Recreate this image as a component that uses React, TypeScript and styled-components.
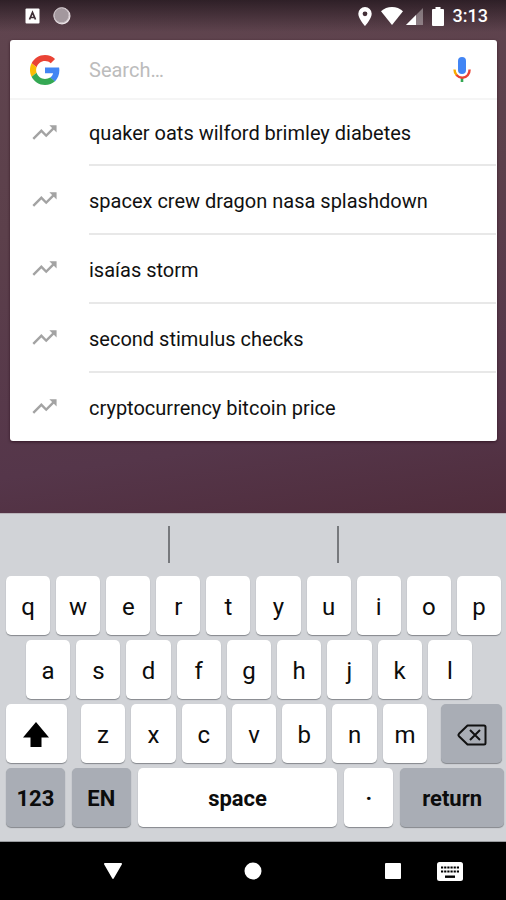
import React from "react";
import styled, { createGlobalStyle } from "styled-components";

const GlobalStyle = createGlobalStyle`
  *, *::before, *::after { box-sizing: border-box; }
  body { margin: 0; background: #000; font-family: Roboto, "Noto Sans", sans-serif; }
  button, input { font: inherit; color: inherit; }
  ul { list-style: none; margin: 0; padding: 0; }
  svg { display: block; flex: none; }
`;

const Screen = styled.div`
  display: flex;
  flex-direction: column;
  min-height: 100vh;
`;

const Wallpaper = styled.main`
  flex: 1;
  background:
    linear-gradient(180deg, rgba(20, 12, 18, 0.65) 0, rgba(20, 12, 18, 0) 32px),
    linear-gradient(172deg, #60454f 0%, #5c404b 40%, #55364a 82%, #4f2c3b 100%);
`;

const StatusBar = styled.header`
  display: flex;
  align-items: center;
  justify-content: space-between;
  height: 32px;
  margin-bottom: 8px;
  padding: 0 18px 0 25px;
  color: #fff;
`;

const StatusGroup = styled.div<{ $gap: number }>`
  display: flex;
  align-items: center;
  gap: ${(p) => p.$gap}px;
`;

const Clock = styled.time`
  margin-left: 4px;
  font-size: 18px;
  font-weight: 500;
  line-height: 24px;
`;

const SearchCard = styled.section`
  margin: 0 9px 0 10px;
  border-radius: 3px;
  background: #fff;
  box-shadow: 0 1px 3px rgba(30, 0, 15, 0.6);
`;

const SearchForm = styled.form`
  display: flex;
  align-items: center;
  height: 60px;
  padding: 1px 26px 0 20px;
  border-bottom: 2px solid #f5f5f5;
`;

const SearchInput = styled.input`
  flex: 1;
  min-width: 0;
  margin-left: 29px;
  padding: 0;
  border: 0;
  outline: 0;
  background: none;
  font-size: 20px;
  line-height: 28px;
  color: #111;
  &::placeholder { color: #bcbcbc; opacity: 1; }
`;

const IconButton = styled.button`
  display: flex;
  padding: 0;
  border: 0;
  background: none;
  color: #fff;
`;

const Suggestion = styled.button`
  display: flex;
  align-items: stretch;
  width: 100%;
  height: 100%;
  padding: 0 1px 0 20px;
  border: 0;
  background: none;
  text-align: left;
  color: #111;
`;

const SuggestionIcon = styled.span`
  display: flex;
  align-items: center;
  width: 59px;
  padding-bottom: 2px;
  color: #a3a3a3;
`;

const SuggestionText = styled.span`
  flex: 1;
  display: flex;
  align-items: center;
  padding-top: 2px;
  font-size: 20px;
  line-height: 28px;
`;

const SuggestionItem = styled.li`
  height: 69px;
  &:first-child { height: 66px; }
  &:last-child { height: 68px; }
  &:not(:last-child) ${SuggestionText} { border-bottom: 2px solid #e8e8e8; }
`;

const Keyboard = styled.section`
  padding-bottom: 14px;
  border-top: 1px solid #b9b3b9;
  border-bottom: 1px solid #999b9f;
  background: #d1d3d7;
`;

const Predictions = styled.div`
  display: grid;
  grid-template-columns: 168fr 169fr 169fr;
  height: 37px;
  margin: 12px 0 13px;
`;

const Prediction = styled.span`
  & + & { border-left: 2px solid #77797d; }
`;

const KeyRows = styled.div`
  display: grid;
  gap: 5px;
`;

const KeyRow = styled.div<{ $columns: string; $gap: number; $pad: string }>`
  display: grid;
  grid-template-columns: ${(p) => p.$columns};
  gap: ${(p) => p.$gap}px;
  padding: ${(p) => p.$pad};
`;

const LetterGroup = styled.div`
  display: grid;
  grid-template-columns: repeat(7, 1fr);
  gap: 6px;
`;

const Key = styled.button<{ $dark?: boolean; $bold?: boolean }>`
  display: flex;
  align-items: center;
  justify-content: center;
  min-width: 0;
  height: 59px;
  padding: 2px 0 0;
  border: 0;
  border-radius: 5px;
  background: ${(p) => (p.$dark ? "#a9adb5" : "#fff")};
  box-shadow: 0 1px 1px #84878c;
  color: #0c0c0c;
  font-size: ${(p) => (p.$bold ? 22 : 24)}px;
  font-weight: ${(p) => (p.$bold ? 700 : 400)};
  line-height: 28px;
`;

const NavBar = styled.nav`
  display: grid;
  grid-template-columns: 43fr 140fr 140fr 140fr 43fr;
  align-items: center;
  height: 58px;
  background: #000;
`;

const NavSlot = styled.div<{ $column: number }>`
  grid-column: ${(p) => p.$column};
  grid-row: 1;
  display: flex;
  justify-content: center;
`;

const KeyboardSlot = styled.div`
  grid-column: 4 / 6;
  grid-row: 1;
  display: flex;
  justify-content: flex-end;
  padding-right: 43px;
`;

const GoogleLogo = () => (
  <svg width="30" height="30" viewBox="0 0 48 48" aria-hidden="true">
    <path fill="#EA4335" d="M24 9.5c3.54 0 6.71 1.22 9.21 3.6l6.85-6.85C35.9 2.38 30.47 0 24 0 14.62 0 6.51 5.38 2.56 13.22l7.98 6.19C12.43 13.72 17.74 9.5 24 9.5z" />
    <path fill="#4285F4" d="M46.98 24.55c0-1.57-.15-3.09-.38-4.55H24v9.02h12.94c-.58 2.96-2.26 5.48-4.78 7.18l7.73 6c4.51-4.18 7.09-10.36 7.09-17.65z" />
    <path fill="#FBBC05" d="M10.53 28.59c-.48-1.45-.76-2.99-.76-4.59s.27-3.14.76-4.59l-7.98-6.19C.92 16.46 0 20.12 0 24c0 3.88.92 7.54 2.56 10.78l7.97-6.19z" />
    <path fill="#34A853" d="M24 48c6.48 0 11.93-2.13 15.89-5.81l-7.73-6c-2.15 1.45-4.92 2.3-8.16 2.3-6.26 0-11.57-4.22-13.47-9.91l-7.98 6.19C6.51 42.62 14.62 48 24 48z" />
  </svg>
);

const MicIcon = () => (
  <svg width="18" height="25" viewBox="0 0 18 25" fill="none" aria-hidden="true">
    <rect x="5" y="0" width="8" height="17" rx="4" fill="#4285F4" />
    <path d="M9 20v5" stroke="#34A853" strokeWidth="2.6" />
    <path d="M1.5 12.5c0 2.6 1 4.6 2.4 6" stroke="#F9AB00" strokeWidth="2.4" />
    <path d="M3.4 18c3.4 3.7 8.6 3.4 11.3.2 1.2-1.4 1.9-3.3 1.9-5.7" stroke="#EA4335" strokeWidth="2.4" />
  </svg>
);

const TrendIcon = () => (
  <svg width="29" height="29" viewBox="0 0 24 24" fill="currentColor" aria-hidden="true">
    <path d="M16 6l2.29 2.29-4.88 4.88-4-4L2 16.59 3.41 18l6-6 4 4 6.3-6.29L22 12V6z" />
  </svg>
);

const AppBadgeIcon = () => (
  <svg width="15" height="16" viewBox="0 0 15 16" aria-hidden="true">
    <rect x="0.5" y="0.5" width="14" height="15" rx="1" fill="#fff" />
    <path d="M4.5 11.5 7.5 4.5l3 7M5.5 9.5h4" fill="none" stroke="#3e2e36" strokeWidth="1.7" />
  </svg>
);

const SyncIcon = () => (
  <svg width="18" height="18" viewBox="0 0 18 18" aria-hidden="true">
    <circle cx="9" cy="9" r="8.5" fill="#eee6ea" />
    <circle cx="8.5" cy="8.3" r="7.2" fill="#a3989e" />
    <circle cx="8.5" cy="8.3" r="7.6" fill="none" stroke="#c4babf" strokeWidth="1" />
  </svg>
);

const PinIcon = () => (
  <svg width="14" height="19" viewBox="0 0 14 19" aria-hidden="true">
    <path fillRule="evenodd" fill="#fff" d="M7 0a6.7 6.7 0 0 0-6.7 6.7C.3 11.5 7 19 7 19s6.7-7.5 6.7-12.3A6.7 6.7 0 0 0 7 0zm0 4.4a2.4 2.4 0 1 1 0 4.8 2.4 2.4 0 0 1 0-4.8z" />
  </svg>
);

const WifiIcon = () => (
  <svg width="22" height="18" viewBox="0 0 22 18" aria-hidden="true">
    <path fill="#fff" d="M11 18 0 4.2C3 1.6 6.8 0 11 0s8 1.6 11 4.2z" />
  </svg>
);

const SignalIcon = () => (
  <svg width="17" height="17" viewBox="0 0 17 17" aria-hidden="true">
    <path fill="#fff" fillOpacity="0.35" d="M0 17 17 0v17z" />
    <path fill="#fff" d="M0 17 10 7v10z" />
  </svg>
);

const BatteryIcon = () => (
  <svg width="12" height="19" viewBox="0 0 12 19" aria-hidden="true">
    <path fill="#fff" d="M3.5 0h5v2H11a1 1 0 0 1 1 1v15a1 1 0 0 1-1 1H1a1 1 0 0 1-1-1V3a1 1 0 0 1 1-1h2.5z" />
  </svg>
);

const ShiftIcon = () => (
  <svg width="26" height="25" viewBox="0 0 26 25" aria-hidden="true">
    <path d="M13 0 26 15.5h-7.5V25h-11v-9.5H0z" />
  </svg>
);

const BackspaceIcon = () => (
  <svg width="30" height="22" viewBox="0 0 30 22" fill="none" stroke="#111" strokeWidth="2" aria-hidden="true">
    <path d="M10.5 1.5H27a1.5 1.5 0 0 1 1.5 1.5v16a1.5 1.5 0 0 1-1.5 1.5H10.5L2 12.2a1.8 1.8 0 0 1 0-2.4z" strokeLinejoin="round" />
    <path d="m13 6 10 10M23 6 13 16" />
  </svg>
);

const KeyboardIcon = () => (
  <svg width="26" height="19" viewBox="0 0 26 19" aria-hidden="true">
    <rect width="26" height="19" rx="2.5" fill="#fff" />
    <path d="M4 5.5h18M4 9.5h18" stroke="#000" strokeWidth="2.2" strokeDasharray="2.2 0.96" />
    <path d="M8 14.7h10" stroke="#000" strokeWidth="2.4" />
  </svg>
);

const suggestions = [
  "quaker oats wilford brimley diabetes",
  "spacex crew dragon nasa splashdown",
  "isaías storm",
  "second stimulus checks",
  "cryptocurrency bitcoin price",
];

const Letters = ({ keys }: { keys: string }) => (
  <>
    {keys.split("").map((letter) => (
      <Key key={letter} type="button">{letter}</Key>
    ))}
  </>
);

export default function App() {
  return (
    <Screen>
      <GlobalStyle />
      <Wallpaper>
        <StatusBar>
          <StatusGroup $gap={13}>
            <AppBadgeIcon />
            <SyncIcon />
          </StatusGroup>
          <StatusGroup $gap={9}>
            <PinIcon />
            <StatusGroup $gap={3}>
              <WifiIcon />
              <SignalIcon />
            </StatusGroup>
            <StatusGroup $gap={5}>
              <BatteryIcon />
              <Clock>3:13</Clock>
            </StatusGroup>
          </StatusGroup>
        </StatusBar>
        <SearchCard>
          <SearchForm role="search" onSubmit={(e) => e.preventDefault()}>
            <GoogleLogo />
            <SearchInput type="text" aria-label="Search" placeholder="Search…" />
            <IconButton type="button" aria-label="Voice search"><MicIcon /></IconButton>
          </SearchForm>
          <ul>
            {suggestions.map((text) => (
              <SuggestionItem key={text}>
                <Suggestion type="button">
                  <SuggestionIcon><TrendIcon /></SuggestionIcon>
                  <SuggestionText>{text}</SuggestionText>
                </Suggestion>
              </SuggestionItem>
            ))}
          </ul>
        </SearchCard>
      </Wallpaper>
      <Keyboard aria-label="Keyboard">
        <Predictions>
          <Prediction />
          <Prediction />
          <Prediction />
        </Predictions>
        <KeyRows>
          <KeyRow $columns="repeat(10, 1fr)" $gap={6} $pad="0 5px 0 6px">
            <Letters keys="qwertyuiop" />
          </KeyRow>
          <KeyRow $columns="repeat(9, 1fr)" $gap={6} $pad="0 34px 0 26px">
            <Letters keys="asdfghjkl" />
          </KeyRow>
          <KeyRow $columns="61fr 347fr 61fr" $gap={14} $pad="0 4px 0 6px">
            <Key type="button" aria-label="Shift"><ShiftIcon /></Key>
            <LetterGroup><Letters keys="zxcvbnm" /></LetterGroup>
            <Key type="button" $dark aria-label="Backspace"><BackspaceIcon /></Key>
          </KeyRow>
          <KeyRow $columns="59fr 59fr 200fr 49fr 104fr" $gap={7} $pad="0 2px 0 6px">
            <Key type="button" $dark $bold>123</Key>
            <Key type="button" $dark $bold>EN</Key>
            <Key type="button" $bold>space</Key>
            <Key type="button" $bold>·</Key>
            <Key type="button" $dark $bold>return</Key>
          </KeyRow>
        </KeyRows>
      </Keyboard>
      <NavBar aria-label="System navigation">
        <NavSlot $column={2}>
          <IconButton type="button" aria-label="Back">
            <svg width="18" height="16" viewBox="0 0 18 16" aria-hidden="true">
              <path fill="currentColor" d="M1 0h16a1 1 0 0 1 .8 1.5L9.7 15.5a.8.8 0 0 1-1.4 0L.2 1.5A1 1 0 0 1 1 0z" />
            </svg>
          </IconButton>
        </NavSlot>
        <NavSlot $column={3}>
          <IconButton type="button" aria-label="Home">
            <svg width="18" height="18" viewBox="0 0 18 18" aria-hidden="true">
              <circle cx="9" cy="9" r="8.5" fill="currentColor" />
            </svg>
          </IconButton>
        </NavSlot>
        <NavSlot $column={4}>
          <IconButton type="button" aria-label="Recent apps">
            <svg width="16" height="16" viewBox="0 0 16 16" aria-hidden="true">
              <rect width="16" height="16" rx="1" fill="currentColor" />
            </svg>
          </IconButton>
        </NavSlot>
        <KeyboardSlot>
          <IconButton type="button" aria-label="Switch keyboard"><KeyboardIcon /></IconButton>
        </KeyboardSlot>
      </NavBar>
    </Screen>
  );
}
